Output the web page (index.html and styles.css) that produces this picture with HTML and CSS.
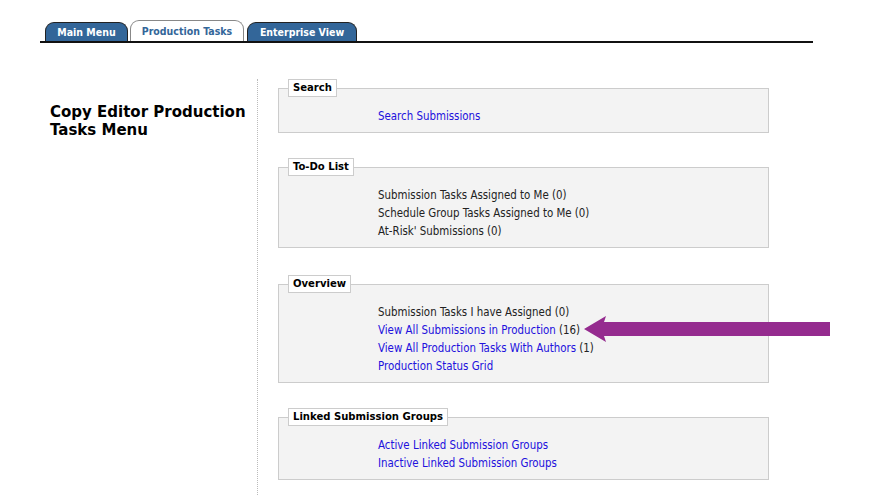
FILE: index.html
```html
<!DOCTYPE html>
<html>
<head>
<meta charset="utf-8">
<link rel="stylesheet" href="styles.css">
</head>
<body>
<div class="tabbar">
  <a class="tab tab-main">Main Menu</a>
  <a class="tab tab-prod active">Production Tasks</a>
  <a class="tab tab-ent">Enterprise View</a>
</div>
<div class="main">
  <div class="side">
    <h1 class="title">Copy Editor Production Tasks Menu</h1>
  </div>
  <div class="content">
    <fieldset class="group">
      <legend>Search</legend>
      <ul class="items">
        <li><a class="link">Search Submissions</a></li>
      </ul>
    </fieldset>
    <fieldset class="group todo">
      <legend>To-Do List</legend>
      <ul class="items">
        <li>Submission Tasks Assigned to Me (0)</li>
        <li>Schedule Group Tasks Assigned to Me (0)</li>
        <li>At-Risk' Submissions (0)</li>
      </ul>
    </fieldset>
    <fieldset class="group">
      <legend>Overview</legend>
      <ul class="items">
        <li>Submission Tasks I have Assigned (0)</li>
        <li><a class="link">View All Submissions in Production</a> (16)</li>
        <li><a class="link">View All Production Tasks With Authors</a> (1)</li>
        <li><a class="link">Production Status Grid</a></li>
      </ul>
    </fieldset>
    <fieldset class="group">
      <legend>Linked Submission Groups</legend>
      <ul class="items">
        <li><a class="link">Active Linked Submission Groups</a></li>
        <li><a class="link">Inactive Linked Submission Groups</a></li>
      </ul>
    </fieldset>
  </div>
</div>
<svg class="arrow" width="250" height="30" viewBox="0 0 250 30">
  <path d="M0 15 L22 2 L20 8 L246 8 L246 22 L20 22 L22 28 Z" fill="#952b8f"/>
</svg>
</body>
</html>
```
FILE: styles.css
```css
html, body {
  margin: 0;
  padding: 0;
  background: #fff;
}
body {
  font-family: "DejaVu Sans Condensed", "DejaVu Sans", sans-serif;
  font-size: 11.4px;
  color: #222;
  width: 888px;
  height: 496px;
  overflow: hidden;
  position: relative;
}
.tabbar {
  margin: 22px 0 0 40px;
  width: 773px;
  height: 21px;
  border-bottom: 2px solid #111;
  display: flex;
  align-items: flex-end;
  padding-left: 5px;
  box-sizing: border-box;
  gap: 2px;
}
.tab {
  display: block;
  height: 19px;
  line-height: 19px;
  background: #336699;
  color: #fff;
  font-size: 10.5px;
  font-weight: bold;
  text-align: center;
  border: 1px solid #222;
  border-bottom: none;
  border-radius: 9px 9px 0 0;
  box-sizing: border-box;
}
.tab-main { width: 83px; }
.tab-prod { width: 114px; }
.tab-ent { width: 110px; margin-left: 1px; }
.tab.active {
  background: #fff;
  color: #336699;
  border-color: #888;
  height: 21px;
  line-height: 21px;
}
.main {
  display: flex;
  margin-top: 36px;
}
.side {
  width: 258px;
  border-right: 1px dotted #bbb;
  min-height: 420px;
  box-sizing: border-box;
  padding: 24px 0 0 50px;
}
.title {
  margin: 0;
  font-family: "DejaVu Sans", sans-serif;
  font-size: 15px;
  line-height: 18px;
  font-weight: bold;
  color: #000;
  width: 200px;
}
.content {
  padding: 0 0 0 20px;
  flex: none;
}
.group {
  width: 491px;
  box-sizing: border-box;
  margin: 0 0 25px 0;
  padding: 0 0 7px 99px;
  border: 1px solid #ccc;
  background: #f3f3f3;
  min-width: 0;
}
.group.todo { margin-bottom: 27px; }
.group legend {
  margin-left: -90px;
  padding: 0 4px;
  background: #fff;
  border: 1px solid #ccc;
  font-size: 11.2px;
  font-weight: bold;
  color: #000;
  line-height: 16px;
}
.items {
  list-style: none;
  margin: 10px 0 0 0;
  padding: 0;
}
.items li {
  line-height: 18px;
  color: #222;
}
.link {
  color: #2211dd;
}
.arrow {
  position: absolute;
  left: 584px;
  top: 314px;
}
```
